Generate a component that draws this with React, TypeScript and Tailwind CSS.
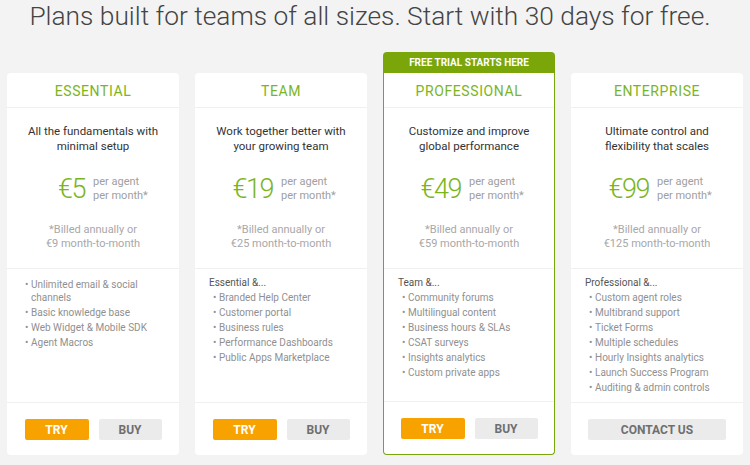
import React from "react";

type Plan = {
  name: string;
  tagline: string[];
  price: string;
  monthly: string;
  intro?: string;
  features: string[];
  featured?: boolean;
  contact?: boolean;
};

const plans: Plan[] = [
  {
    name: "ESSENTIAL",
    tagline: ["All the fundamentals with", "minimal setup"],
    price: "€5",
    monthly: "€9 month-to-month",
    features: [
      "Unlimited email & social channels",
      "Basic knowledge base",
      "Web Widget & Mobile SDK",
      "Agent Macros",
    ],
  },
  {
    name: "TEAM",
    tagline: ["Work together better with", "your growing team"],
    price: "€19",
    monthly: "€25 month-to-month",
    intro: "Essential &...",
    features: [
      "Branded Help Center",
      "Customer portal",
      "Business rules",
      "Performance Dashboards",
      "Public Apps Marketplace",
    ],
  },
  {
    name: "PROFESSIONAL",
    tagline: ["Customize and improve", "global performance"],
    price: "€49",
    monthly: "€59 month-to-month",
    intro: "Team &...",
    featured: true,
    features: [
      "Community forums",
      "Multilingual content",
      "Business hours & SLAs",
      "CSAT surveys",
      "Insights analytics",
      "Custom private apps",
    ],
  },
  {
    name: "ENTERPRISE",
    tagline: ["Ultimate control and", "flexibility that scales"],
    price: "€99",
    monthly: "€125 month-to-month",
    intro: "Professional &...",
    contact: true,
    features: [
      "Custom agent roles",
      "Multibrand support",
      "Ticket Forms",
      "Multiple schedules",
      "Hourly Insights analytics",
      "Launch Success Program",
      "Auditing & admin controls",
    ],
  },
];

const PlanCard = ({ plan }: { plan: Plan }) => {
  return (
    <div
      className={`flex flex-col h-[382px] bg-white ${
        plan.featured
          ? "border-x border-b border-[#7aa60a] rounded-b-[4px]"
          : "rounded-[4px]"
      }`}
    >
      {/* Header */}
      <div className="h-[35px] pt-[3px] flex items-center justify-center border-b border-[#f0f0f0]">
        <span className="text-[14px] tracking-[0.6px] text-[#7ab51d]">{plan.name}</span>
      </div>

      {/* Pitch + price */}
      <div className="h-[160px] pt-[16px] text-center">
        <p className="text-[11.5px] leading-[15px] text-[#333]">
          {plan.tagline[0]}
          <br />
          {plan.tagline[1]}
        </p>
        {/* price sits right of centre line, unit text starts on it */}
        <div className="mt-[21px] h-[28px] grid grid-cols-2 items-center">
          <span className="pr-[8px] text-right text-[27px] leading-[28px] font-light text-[#7ab51d] tracking-[-1.5px]">
            {plan.price}
          </span>
          <span className="text-left text-[11px] leading-[14px] text-[#a0a0a0]">
            per agent
            <br />
            per month*
          </span>
        </div>
        <p className="mt-[20px] text-[11px] leading-[14px] text-[#a8a8a8]">
          *Billed annually or
          <br />
          {plan.monthly}
        </p>
      </div>

      {/* Features */}
      <div
        className={`flex-1 border-t border-[#f0f0f0] ${
          plan.intro ? "pt-[7px]" : "pt-[9px]"
        }`}
      >
        {plan.intro && (
          <div className="pl-[14px] text-[10px] leading-[13px] text-[#555]">{plan.intro}</div>
        )}
        <ul className={plan.intro ? "mt-[2px]" : ""}>
          {plan.features.map((f) => (
            <li
              key={f}
              className="flex pl-[18px] pr-[22px] mb-[2px] text-[10px] leading-[13px] text-[#909090]"
            >
              <span className="w-[6px] shrink-0">•</span>
              <span>{f}</span>
            </li>
          ))}
        </ul>
      </div>

      {/* Actions */}
      <div className="h-[53px] border-t border-[#f0f0f0] pt-[16px] flex justify-center gap-[10px]">
        {plan.contact ? (
          <button className="w-[138px] h-[21px] rounded-[2px] bg-[#ebebeb] text-[12px] font-bold text-[#6f6f6f]">
            CONTACT US
          </button>
        ) : (
          <>
            <button className="w-[64px] h-[21px] rounded-[2px] bg-[#f8a200] text-[12px] font-bold text-white">
              TRY
            </button>
            <button className="w-[63px] h-[21px] rounded-[2px] bg-[#ebebeb] text-[12px] font-bold text-[#6f6f6f]">
              BUY
            </button>
          </>
        )}
      </div>
    </div>
  );
};

const App = () => {
  return (
    <div
      className="w-[750px] h-[465px] bg-[#f3f3f3] overflow-hidden"
      style={{ fontFamily: "Roboto, 'Liberation Sans', sans-serif" }}
    >
      <h1 className="h-[52px] pr-[10px] text-center text-[26.3px] leading-[32px] font-light text-[#444]">
        Plans built for teams of all sizes. Start with 30 days for free.
      </h1>

      <div className="px-[7px] grid grid-cols-4 gap-[16px]">
        {plans.map((plan) =>
          plan.featured ? (
            <div key={plan.name}>
              <div className="h-[21px] rounded-t-[4px] bg-[#7aa60a] flex items-center justify-center text-[10px] font-bold text-white">
                FREE TRIAL STARTS HERE
              </div>
              <PlanCard plan={plan} />
            </div>
          ) : (
            <div key={plan.name} className="pt-[21px]">
              <PlanCard plan={plan} />
            </div>
          )
        )}
      </div>
    </div>
  );
};

export default App;
